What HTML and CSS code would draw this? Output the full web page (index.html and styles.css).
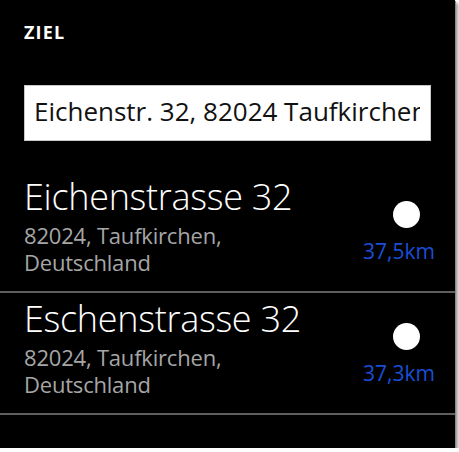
FILE: index.html
```html
<!DOCTYPE html>
<html lang="de">
<head>
<meta charset="utf-8">
<title>Ziel</title>
<link rel="stylesheet" href="styles.css">
</head>
<body>
<div class="screen">
  <div class="header">ZIEL</div>
  <div class="searchbox"><div class="searchtext">Eichenstr. 32, 82024 Taufkirchen</div></div>
  <div class="list">
    <div class="item">
      <div class="info">
        <div class="title">Eichenstrasse 32</div>
        <div class="sub">82024, Taufkirchen, Deutschland</div>
      </div>
      <div class="meta">
        <span class="dot"></span>
        <span class="dist">37,5km</span>
      </div>
    </div>
    <div class="item">
      <div class="info">
        <div class="title">Eschenstrasse 32</div>
        <div class="sub">82024, Taufkirchen, Deutschland</div>
      </div>
      <div class="meta">
        <span class="dot"></span>
        <span class="dist">37,3km</span>
      </div>
    </div>
  </div>
</div>
</body>
</html>
```
FILE: styles.css
```css
html, body {
  margin: 0;
  padding: 0;
  background: #ffffff;
}
body {
  font-family: "Open Sans", "Noto Sans", sans-serif;
}
.screen {
  width: 455px;
  height: 448px;
  background: #000000;
  box-shadow: 1px 1px 0 #8a8a8a, 3px 3px 3px #9a9a9a;
  overflow: hidden;
  display: flex;
  flex-direction: column;
}
.header {
  color: #ffffff;
  font-weight: 700;
  font-size: 18px;
  line-height: 20px;
  letter-spacing: 1.2px;
  padding: 22px 0 0 24px;
  height: 20px;
}
.searchbox {
  margin: 43px 0 0 24px;
  width: 405px;
  height: 54px;
  background: #ffffff;
  border: 1px solid #c8c8c8;
  overflow: hidden;
  white-space: nowrap;
}
.searchtext {
  color: #111111;
  font-size: 26px;
  line-height: 30px;
  margin: 10px 10px 0 9px;
  overflow: hidden;
}
.list {
  margin-top: 30px;
  display: flex;
  flex-direction: column;
}
.item {
  height: 120px;
  border-bottom: 2px solid #5f5f5f;
  display: flex;
  justify-content: space-between;
  padding: 0 20px 0 24px;
}
.title {
  color: #ffffff;
  font-weight: 300;
  font-size: 36px;
  line-height: 44px;
  margin-top: 4px;
  margin-bottom: 3px;
  letter-spacing: -0.3px;
}
.sub {
  color: #a6a6a6;
  font-size: 22px;
  line-height: 27px;
  letter-spacing: -0.2px;
  max-width: 250px;
}
.meta {
  display: flex;
  flex-direction: column;
  align-items: flex-end;
  padding-top: 30px;
}
.dot {
  width: 27px;
  height: 27px;
  border-radius: 50%;
  background: #ffffff;
  margin-right: 15px;
}
.dist {
  color: #1a4ed8;
  font-size: 21px;
  line-height: 26px;
  margin-top: 10px;
}
```
